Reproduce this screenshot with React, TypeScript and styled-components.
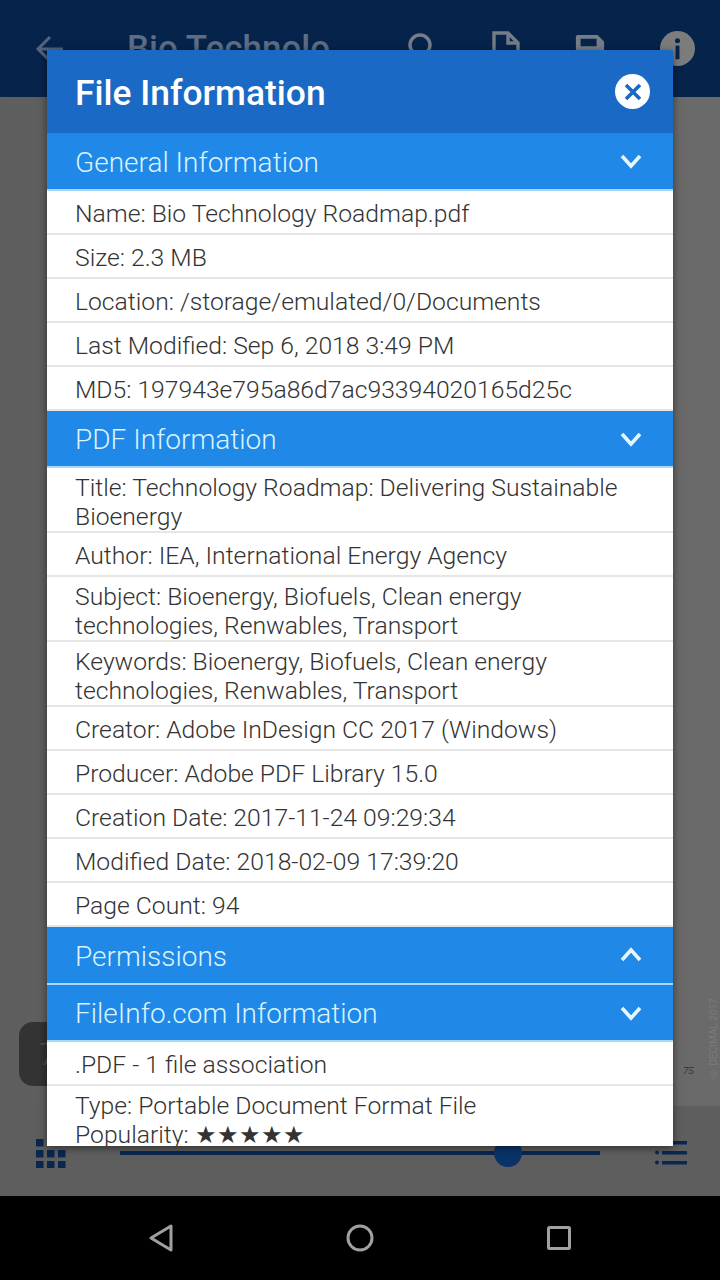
import styled, { createGlobalStyle } from 'styled-components';

const GlobalStyle = createGlobalStyle`
    html, body {
        margin: 0;
        padding: 0;
        background: #000;
    }
    * {
        box-sizing: border-box;
    }
`;

type Section = {
    title: string;
    open: boolean;
    rows: string[];
};

const sections: Section[] = [
    {
        title: 'General Information',
        open: false,
        rows: [
            'Name: Bio Technology Roadmap.pdf',
            'Size: 2.3 MB',
            'Location: /storage/emulated/0/Documents',
            'Last Modified: Sep 6, 2018 3:49 PM',
            'MD5: 197943e795a86d7ac93394020165d25c',
        ],
    },
    {
        title: 'PDF Information',
        open: false,
        rows: [
            'Title: Technology Roadmap: Delivering Sustainable Bioenergy',
            'Author: IEA, International Energy Agency',
            'Subject: Bioenergy, Biofuels, Clean energy technologies, Renwables, Transport',
            'Keywords: Bioenergy, Biofuels, Clean energy technologies, Renwables, Transport',
            'Creator: Adobe InDesign CC 2017 (Windows)',
            'Producer: Adobe PDF Library 15.0',
            'Creation Date: 2017-11-24 09:29:34',
            'Modified Date: 2018-02-09 17:39:20',
            'Page Count: 94',
        ],
    },
    { title: 'Permissions', open: true, rows: [] },
    { title: 'FileInfo.com Information', open: false, rows: ['.PDF - 1 file association'] },
];

const Chevron = ({ up }: { up: boolean }) => (
    <svg width="24" height="16" viewBox="0 0 24 16" fill="none" stroke="#e6f6ff" strokeWidth="3.6">
        <path d={up ? 'M3 13 L12 3 L21 13' : 'M3 3 L12 13 L21 3'} />
    </svg>
);

export default function App() {
    return (
        <Screen>
            <GlobalStyle />
            <AppBar>
                <svg width="28" height="30" viewBox="0 0 28 30" fill="none" stroke="#52647e" strokeWidth="3">
                    <path d="M28 15 H3 M15 3 L3 15 L15 27" />
                </svg>
                <AppTitle>Bio Technolo</AppTitle>
                <BarIcons>
                    <svg width="30" height="34" viewBox="0 0 30 34" fill="none" stroke="#757d88" strokeWidth="3.4">
                        <circle cx="12" cy="13" r="10" />
                        <path d="M19 21 L28 32" />
                    </svg>
                    <svg width="28" height="36" viewBox="0 0 28 36" fill="none" stroke="#757d88" strokeWidth="3.4">
                        <path d="M2 34 V2 H16 L26 12 V34 Z M16 2 V12 H26" />
                    </svg>
                    <svg width="32" height="34" viewBox="0 0 34 34">
                        <path
                            fill="#757d88"
                            d="M2 4 a2 2 0 0 1 2 -2 H25 L32 9 V30 a2 2 0 0 1 -2 2 H4 a2 2 0 0 1 -2 -2 Z M7 6 V14 H24 V6 Z"
                            fillRule="evenodd"
                        />
                    </svg>
                    <InfoDisc>
                        <svg width="35" height="35" viewBox="0 0 36 36" fill="#06234b">
                            <circle cx="18" cy="10" r="2.6" />
                            <rect x="16" y="15" width="4" height="14" />
                        </svg>
                    </InfoDisc>
                </BarIcons>
            </AppBar>
            <Content>
                <PageBadge>7</PageBadge>
                <PageNumber>75</PageNumber>
                <Credit>© DECIMAL 2017</Credit>
                <BottomBar>
                    <svg width="30" height="30" viewBox="0 0 30 30" fill="#0a2750">
                        {[0, 1, 2].map((r) =>
                            [0, 1, 2].map((c) => (r === 0 && c > 0 ? null : <rect key={`${r}${c}`} x={c * 11} y={r * 11 + 1} width="7.5" height="7.5" />)),
                        )}
                    </svg>
                    <SliderTrack>
                        <SliderThumb />
                    </SliderTrack>
                    <svg width="32" height="26" viewBox="0 0 32 26" fill="#0a2750">
                        <rect x="7" y="1" width="25" height="3.5" />
                        <rect x="7" y="11" width="25" height="3.5" />
                        <rect x="7" y="21" width="25" height="3.5" />
                        <circle cx="2" cy="12.5" r="2" />
                        <circle cx="2" cy="22.5" r="2" />
                    </svg>
                </BottomBar>
            </Content>
            <NavBar>
                <svg width="26" height="30" viewBox="0 0 26 30" fill="none" stroke="#a0a0a0" strokeWidth="3">
                    <path d="M23 3 V27 L3 15 Z" strokeLinejoin="round" />
                </svg>
                <svg width="28" height="28" viewBox="0 0 28 28" fill="none" stroke="#a0a0a0" strokeWidth="3">
                    <circle cx="14" cy="14" r="12" />
                </svg>
                <svg width="26" height="26" viewBox="0 0 26 26" fill="none" stroke="#a0a0a0" strokeWidth="3">
                    <rect x="2.5" y="2.5" width="21" height="21" rx="1" />
                </svg>
            </NavBar>
            <Dialog>
                <DialogHeader>
                    <DialogTitle>File Information</DialogTitle>
                    <CloseButton>
                        <svg width="20" height="20" viewBox="0 0 20 20" fill="none" stroke="#1a69c4" strokeWidth="3.6">
                            <path d="M3 3 L17 17 M17 3 L3 17" />
                        </svg>
                    </CloseButton>
                </DialogHeader>
                {sections.map((section) => (
                    <div key={section.title}>
                        <SectionHeader>
                            <SectionTitle>{section.title}</SectionTitle>
                            <Chevron up={section.open} />
                        </SectionHeader>
                        {section.rows.map((row) => (
                            <Row key={row} $wrapped={row.length > 45}>
                                {row}
                            </Row>
                        ))}
                    </div>
                ))}
                <LastRow>
                    Type: Portable Document Format File
                    <br />
                    Popularity: <Stars>★★★★★</Stars>
                </LastRow>
            </Dialog>
        </Screen>
    );
}

const Screen = styled.div`
    position: relative;
    width: 720px;
    height: 1280px;
    display: flex;
    flex-direction: column;
    overflow: hidden;
    font-family: Roboto, 'Liberation Sans', sans-serif;
`;

const AppBar = styled.header`
    height: 97px;
    background: #06234b;
    display: flex;
    align-items: center;
    padding: 0 25px 0 35px;
`;

const AppTitle = styled.div`
    margin-left: 64px;
    font-size: 35px;
    font-weight: 500;
    color: #5c6d85;
    white-space: nowrap;
`;

const BarIcons = styled.div`
    margin-left: auto;
    display: flex;
    align-items: center;
    gap: 54px;
`;

const InfoDisc = styled.div`
    width: 35px;
    height: 35px;
    border-radius: 50%;
    background: #7c7c7c;
`;

const Content = styled.main`
    position: relative;
    flex: 1;
    background: linear-gradient(90deg, #5e5e5e, #6a6a6a 100%);
    display: flex;
    flex-direction: column;
    justify-content: flex-end;
`;

const PageBadge = styled.div`
    position: absolute;
    left: 19px;
    top: 925px;
    width: 60px;
    height: 64px;
    padding-left: 20px;
    border-radius: 14px;
    background: #333;
    display: flex;
    align-items: center;
    font-size: 32px;
    font-weight: 300;
    color: #505050;
`;

const PageNumber = styled.div`
    position: absolute;
    left: 683px;
    top: 967px;
    font-family: 'Liberation Serif', serif;
    font-style: italic;
    font-size: 11px;
    color: #2c2c2c;
`;

const Credit = styled.div`
    position: absolute;
    right: 1px;
    top: 902px;
    height: 80px;
    writing-mode: vertical-rl;
    transform: rotate(180deg);
    font-size: 10px;
    white-space: nowrap;
    color: #7a7a7a;
`;

const BottomBar = styled.div`
    height: 90px;
    padding: 4px 33px 0 36px;
    display: flex;
    align-items: center;
    justify-content: space-between;
    background: #5e5e5e;
`;

const SliderTrack = styled.div`
    position: relative;
    width: 480px;
    height: 4px;
    margin: 0 26px 0 24px;
    background: #0a2750;
`;

const SliderThumb = styled.div`
    position: absolute;
    left: 374px;
    top: -12px;
    width: 28px;
    height: 28px;
    border-radius: 50%;
    background: #0a3468;
`;

const NavBar = styled.nav`
    height: 84px;
    background: #000;
    display: flex;
    align-items: center;
    justify-content: center;
    gap: 172px;
    padding-bottom: 1px;
`;

const Dialog = styled.section`
    position: absolute;
    left: 47px;
    top: 50px;
    width: 626px;
    height: 1096px;
    background: #fff;
    overflow: hidden;
    box-shadow: 0 2px 8px rgba(0, 0, 0, 0.5);
`;

const DialogHeader = styled.div`
    height: 83px;
    padding: 0 23px 0 28px;
    background: #1a69c4;
    display: flex;
    align-items: center;
    justify-content: space-between;
`;

const DialogTitle = styled.h1`
    margin: 2px 0 0;
    font-size: 35.4px;
    font-weight: 500;
    color: #fff;
`;

const CloseButton = styled.div`
    width: 35px;
    height: 35px;
    border-radius: 50%;
    background: #fff;
    display: flex;
    align-items: center;
    justify-content: center;
`;

const SectionHeader = styled.div`
    height: 57.5px;
    padding: 1px 30px 0 28px;
    background: #2088e6;
    border-bottom: 2px solid #a5d8fa;
    display: flex;
    align-items: center;
    justify-content: space-between;
    font-size: 28px;
    font-weight: 300;
    color: #d9f3ff;
`;

const SectionTitle = styled.span`
    margin-top: 2px;
`;

const Row = styled.div<{ $wrapped: boolean }>`
    min-height: 44px;
    padding: ${(props) => (props.$wrapped ? '5px' : '8px')} 28px 0;
    border-bottom: 2px solid #e6e6e6;
    font-size: 24.7px;
    font-weight: 300;
    line-height: 29px;
    color: #333;
`;

const LastRow = styled.div`
    padding: 5px 28px 0;
    font-size: 24.7px;
    font-weight: 300;
    line-height: 29px;
    color: #333;
`;

const Stars = styled.span`
    font-family: 'DejaVu Sans', sans-serif;
    font-size: 24px;
    color: #333;
`;
